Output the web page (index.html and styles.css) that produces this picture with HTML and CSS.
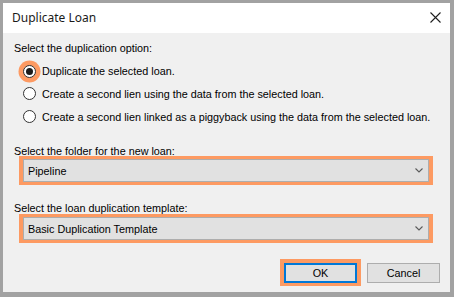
FILE: index.html
```html
<!DOCTYPE html>
<html>
<head>
<meta charset="utf-8">
<link rel="stylesheet" href="styles.css">
</head>
<body>
<div class="window">
  <div class="titlebar">
    <span class="title">Duplicate Loan</span>
    <svg class="close" width="11" height="11" viewBox="0 0 11 11"><path d="M0.5 0.5 L10.5 10.5 M10.5 0.5 L0.5 10.5" stroke="#1e1e1e" stroke-width="1.1" fill="none"/></svg>
  </div>
  <div class="content">
    <div class="label first">Select the duplication option:</div>
    <div class="options">
      <div class="option"><span class="radio checked highlight"></span><span>Duplicate the selected loan.</span></div>
      <div class="option"><span class="radio"></span><span>Create a second lien using the data from the selected loan.</span></div>
      <div class="option"><span class="radio"></span><span>Create a second lien linked as a piggyback using the data from the selected loan.</span></div>
    </div>
    <div class="label folder">Select the folder for the new loan:</div>
    <div class="hl combo-hl first-combo">
      <div class="combo"><span>Pipeline</span><svg width="8" height="5" viewBox="0 0 8 5"><path d="M0.5 0.5 L4 4 L7.5 0.5" stroke="#5a5a5a" stroke-width="1.1" fill="none"/></svg></div>
    </div>
    <div class="label template">Select the loan duplication template:</div>
    <div class="hl combo-hl">
      <div class="combo"><span>Basic Duplication Template</span><svg width="8" height="5" viewBox="0 0 8 5"><path d="M0.5 0.5 L4 4 L7.5 0.5" stroke="#5a5a5a" stroke-width="1.1" fill="none"/></svg></div>
    </div>
    <div class="buttons">
      <div class="hl btn-hl"><div class="btn default">OK</div></div>
      <div class="btn">Cancel</div>
    </div>
  </div>
</div>
</body>
</html>
```

FILE: styles.css
```css
html, body {
  margin: 0;
  padding: 0;
}
body {
  width: 454px;
  height: 297px;
  overflow: hidden;
  font-family: "Liberation Sans", Arial, sans-serif;
  font-size: 10.8px;
  color: #000;
}
.window {
  box-sizing: border-box;
  width: 454px;
  height: 297px;
  border-style: solid;
  border-color: #a2a2a2;
  border-width: 3px 4px 5px 3px;
  background: #f0f0f0;
  display: flex;
  flex-direction: column;
}
.titlebar {
  height: 30px;
  background: #fff;
  display: flex;
  align-items: center;
  justify-content: space-between;
  padding: 0 9px 0 9px;
  flex: none;
}
.title {
  font-family: "Noto Sans", "Open Sans", sans-serif;
  font-size: 12px;
  color: #1a1a1a;
  margin-top: -1px;
}
.close {
  display: block;
  margin-top: -1px;
}
.content {
  padding: 9px 10px 0 11px;
  display: flex;
  flex-direction: column;
}
.label {
  line-height: 12px;
  height: 12px;
  white-space: nowrap;
}
.options {
  margin-top: 6px;
  display: flex;
  flex-direction: column;
}
.option {
  height: 22px;
  display: flex;
  align-items: center;
  white-space: nowrap;
}
.option + .option {
  height: 23px;
}
.radio {
  box-sizing: border-box;
  width: 13px;
  height: 13px;
  border: 1px solid #333;
  border-radius: 50%;
  background: #fff;
  margin-left: 9px;
  margin-right: 6px;
  flex: none;
  display: flex;
  align-items: center;
  justify-content: center;
}
.radio.checked::after {
  content: "";
  width: 7px;
  height: 7px;
  border-radius: 50%;
  background: #1a1a1a;
}
.radio.highlight {
  box-shadow: 0 0 0 4.5px #fd9a62;
}
.label.folder {
  margin-top: 17px;
}
.label.template {
  margin-top: 17px;
}
.hl {
  background: #fd9a62;
}
.combo-hl {
  margin: 0 7px 0 5px;
  padding: 3px 4px;
}
.first-combo {
  margin-top: -1px;
}
.combo {
  box-sizing: border-box;
  height: 23px;
  background: #e1e1e1;
  border: 1px solid #adadad;
  display: flex;
  align-items: center;
  justify-content: space-between;
  padding: 0 5px 0 4px;
}
.combo svg {
  display: block;
}
.buttons {
  margin-top: 16px;
  display: flex;
  justify-content: flex-end;
  align-items: flex-start;
  gap: 6px;
}
.btn-hl {
  padding: 4px 4px 3px 4px;
}
.btn {
  box-sizing: border-box;
  width: 73px;
  height: 20px;
  background: #e1e1e1;
  border: 1px solid #adadad;
  display: flex;
  align-items: center;
  justify-content: center;
  margin-top: 4px;
}
.btn-hl .btn {
  margin-top: 0;
}
.btn.default {
  border: 2px solid #0078d7;
}
```
